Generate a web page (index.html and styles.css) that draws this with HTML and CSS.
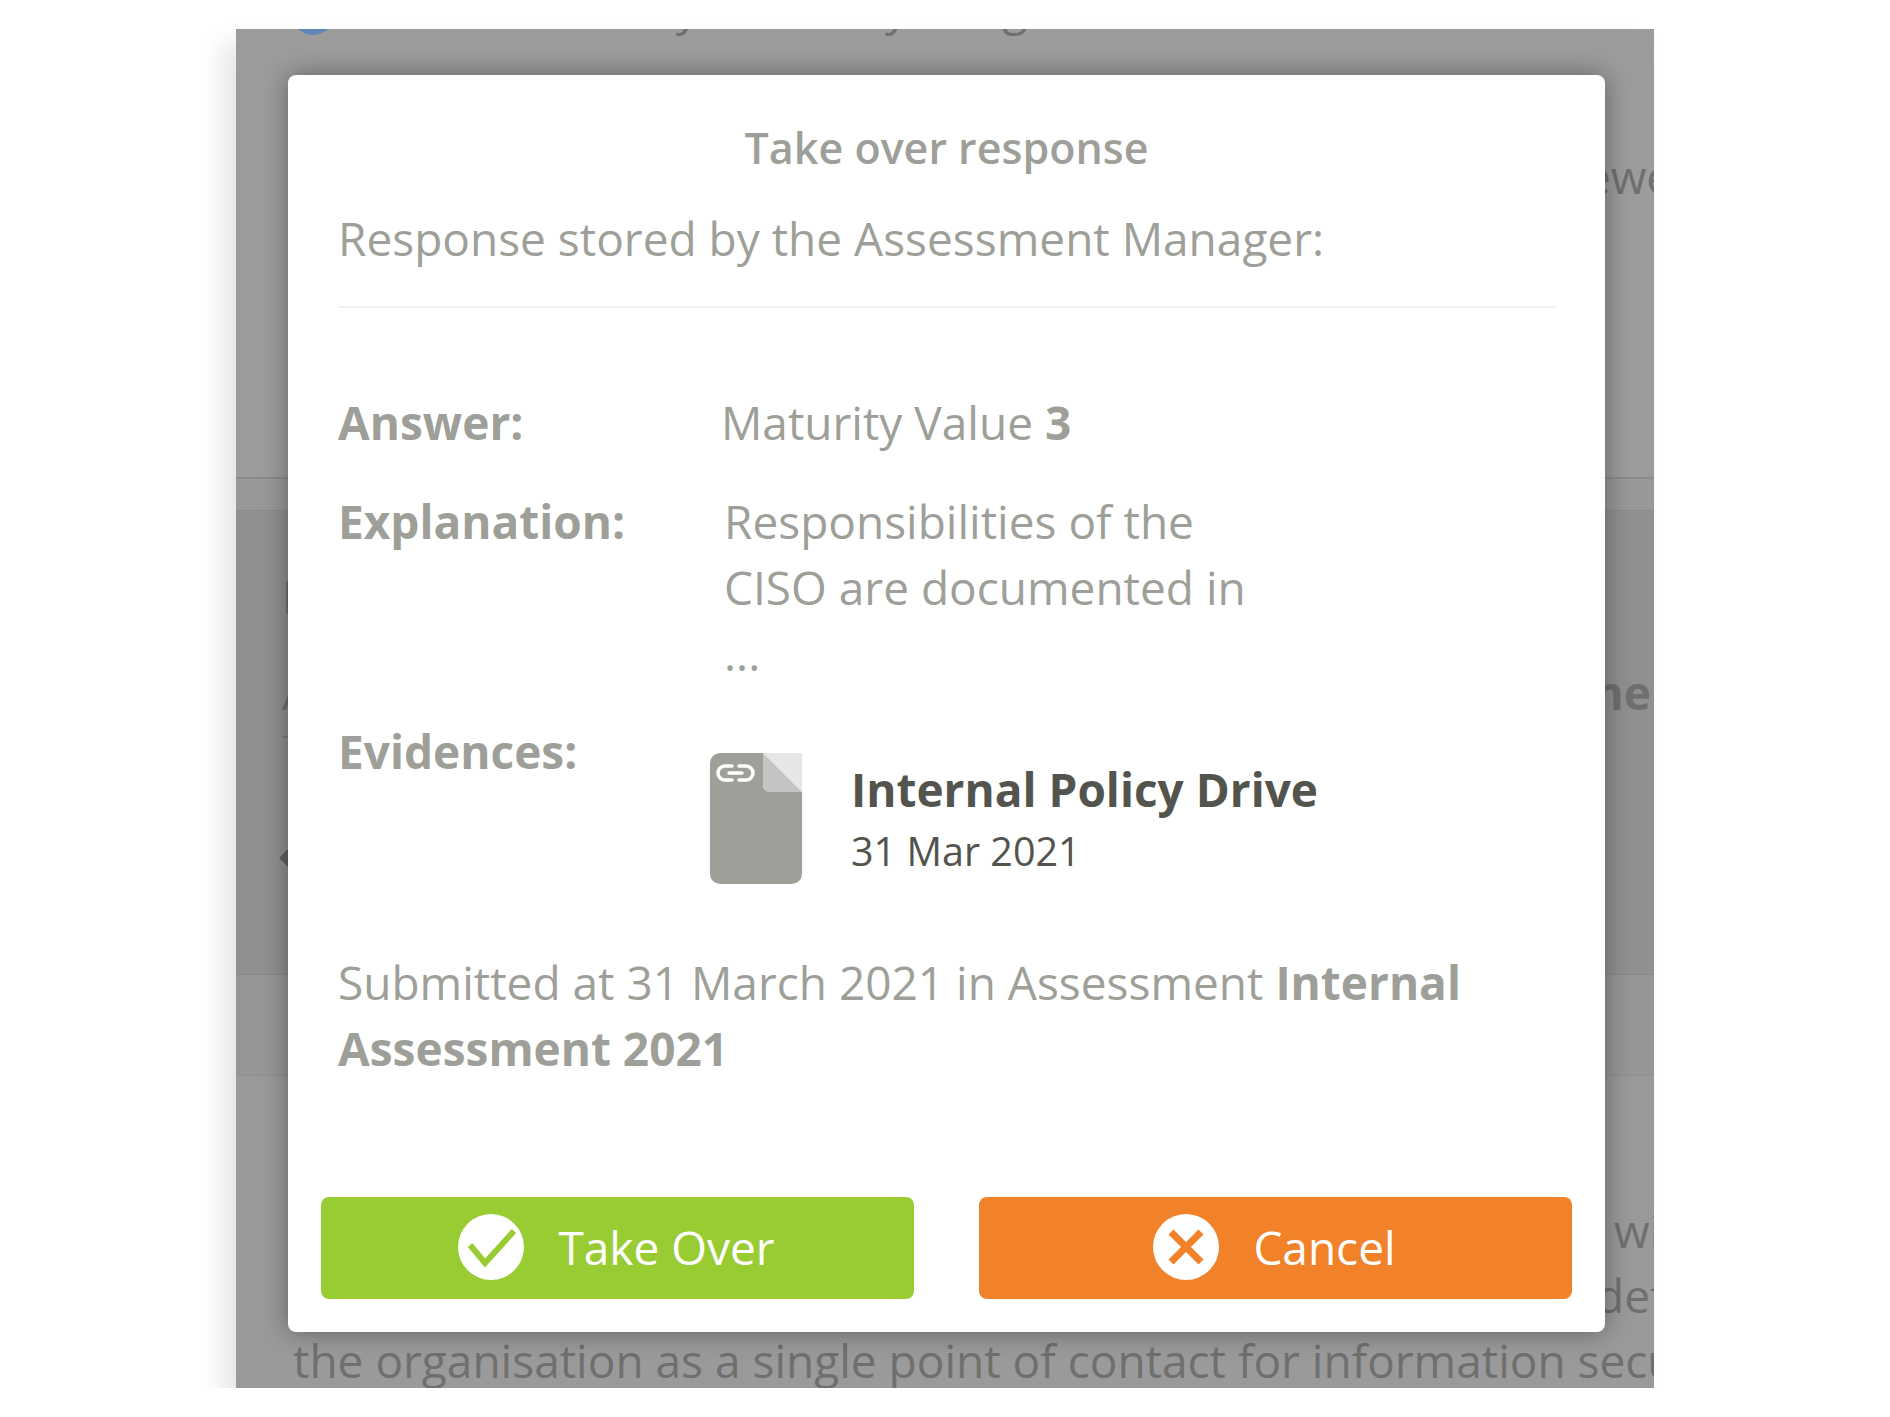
FILE: index.html
```html
<!DOCTYPE html>
<html lang="en">
<head>
    <meta charset="UTF-8">
    <title>Take over response</title>
    <link rel="stylesheet" href="styles.css">
</head>
<body>
    <div class="screen">
        <div class="page">
            <section class="page-top">
                <div class="question">
                    <span class="dot"></span>
                    <span class="question-text">Is there a clearly stated by the general</span>
                </div>
                <div class="reviewer">Reviewer</div>
            </section>
            <div class="page-band"></div>
            <section class="page-main">
                <div class="main-title">I</div>
                <div class="main-row">
                    <span>A</span>
                    <b>Done</b>
                </div>
                <div class="main-rule"></div>
                <div class="main-arrow"></div>
            </section>
            <div class="page-foot"></div>
            <section class="page-text">
                <p>The Group Information Security Officer is now appointed and will</p>
                <p>and has the authority and the resources to take on the tasks defined</p>
                <p>the organisation as a single point of contact for information security</p>
            </section>
        </div>

        <div class="modal">
            <h2 class="modal-title">Take over response</h2>
            <p class="modal-sub">Response stored by the Assessment Manager:</p>
            <div class="modal-rule"></div>

            <div class="details">
                <div class="label label-answer">Answer:</div>
                <div class="value value-answer">Maturity Value <b>3</b></div>

                <div class="label label-expl">Explanation:</div>
                <div class="value value-expl">Responsibilities of the<br>CISO are documented in<br>...</div>

                <div class="label label-evid">Evidences:</div>
                <div class="evidence">
                    <svg class="doc-icon" viewBox="0 0 92 131" aria-hidden="true">
                        <path fill="#e6e6e4" d="M53 0H92V39z"/>
                        <path fill="#9e9f99" d="M10 0H53V32a7 7 0 0 0 7 7H92V121a10 10 0 0 1-10 10H10a10 10 0 0 1-10-10V10A10 10 0 0 1 10 0z"/>
                        <path fill="#c4c5c2" d="M53 0L92 39H60a7 7 0 0 1-7-7z"/>
                        <path fill="none" stroke="#fff" stroke-width="3.5" stroke-linecap="round" d="M22 13h-7a7 7 0 0 0 0 14h7M29 13h7a7 7 0 0 1 0 14h-7M19 20h13"/>
                    </svg>
                    <div class="evidence-text">
                        <div class="evidence-name">Internal Policy Drive</div>
                        <div class="evidence-date">31 Mar 2021</div>
                    </div>
                </div>
            </div>

            <p class="submitted">Submitted at 31 March 2021 in Assessment <b>Internal Assessment 2021</b></p>

            <div class="actions">
                <button class="btn btn-ok">
                    <svg class="btn-icon" viewBox="0 0 66 66" aria-hidden="true">
                        <circle cx="33" cy="33" r="33" fill="#fff"/>
                        <path d="M12 31L27 49L56 17" fill="none" stroke="#99cc33" stroke-width="6"/>
                    </svg>
                    <span>Take Over</span>
                </button>
                <button class="btn btn-cancel">
                    <svg class="btn-icon" viewBox="0 0 66 66" aria-hidden="true">
                        <circle cx="33" cy="33" r="33" fill="#fff"/>
                        <path d="M18 18L48 48M48 18L18 48" fill="none" stroke="#f2822a" stroke-width="7"/>
                    </svg>
                    <span>Cancel</span>
                </button>
            </div>
        </div>
    </div>
</body>
</html>
```

FILE: styles.css
```css
body {
    margin: 0;
    background: #fff;
    font-family: 'Open Sans', 'Noto Sans', sans-serif;
}

.screen {
    position: relative;
    width: 1418px;
    height: 1359px;
    margin: 29px 0 0 236px;
    overflow: visible;
}

/* dimmed page behind the dialog */
.page {
    width: 100%;
    height: 100%;
    overflow: hidden;
    display: flex;
    flex-direction: column;
    background: #9c9c9c;
    color: #6f706e;
    font-size: 46px;
    box-shadow: -14px 14px 24px rgba(0, 0, 0, 0.1);
}

.page-top {
    height: 448px;
    flex: none;
    padding-left: 55px;
    box-sizing: border-box;
}

.question {
    display: flex;
    align-items: center;
    gap: 14px;
    height: 44px;
    margin-top: -38px;
    white-space: nowrap;
}

.question-text {
    padding-bottom: 12px;
}

.dot {
    width: 44px;
    height: 44px;
    flex: none;
    border-radius: 50%;
    background: #5f86b5;
}

.reviewer {
    margin-top: 110px;
    text-align: right;
    margin-right: -37px;
}

.page-band {
    height: 31px;
    flex: none;
    background: #989898;
    border-top: 2px solid #8b8b8b;
}

.page-main {
    height: 465px;
    flex: none;
    padding-left: 46px;
    box-sizing: border-box;
    background: #8f9190;
    border-top: 1px solid #8a8a8a;
    border-bottom: 1px solid #898b8a;
}

.main-title {
    margin-top: 60px;
    font-weight: 700;
    line-height: 50px;
}

.main-row {
    display: flex;
    justify-content: space-between;
    margin-top: 46px;
    line-height: 50px;
}

.main-row b {
    margin-right: 3px;
}

.main-rule {
    width: 200px;
    height: 2px;
    margin-top: 19px;
    background: #7d7e7d;
}

.main-arrow {
    width: 14px;
    height: 14px;
    margin-top: 113px;
    background: #606160;
    transform: rotate(45deg);
}

.page-foot {
    height: 100px;
    flex: none;
    background: #969696;
    border-bottom: 1px solid #8f8f8f;
}

.page-text {
    flex: 1;
    padding: 122px 0 0 57px;
    background: #9a9a9a;
    line-height: 65px;
    white-space: nowrap;
}

.page-text p {
    margin: 0;
}

/* dialog */
.modal {
    position: absolute;
    left: 52px;
    top: 46px;
    width: 1317px;
    height: 1257px;
    box-sizing: border-box;
    padding: 45px 33px 33px;
    display: flex;
    flex-direction: column;
    background: #fff;
    border-radius: 8px;
    box-shadow: 0 0 26px rgba(0, 0, 0, 0.38);
    color: #9e9f99;
    font-size: 46px;
    line-height: 66px;
}

.modal-title {
    margin: 0;
    font-size: 43px;
    font-weight: 600;
    line-height: 56px;
    text-align: center;
}

.modal-sub {
    margin: 32px 17px 0;
    line-height: 60px;
}

.modal-rule {
    height: 2px;
    margin: 38px 17px 0;
    background: #f2f0ec;
}

.details {
    display: grid;
    grid-template-columns: 383px 1fr;
    margin: 81px 17px 0;
}

.label {
    font-weight: 700;
}

.value b {
    font-weight: 700;
}

.value-answer,
.label-answer {
    margin-bottom: 33px;
}

.value-expl {
    padding-left: 3px;
    margin-bottom: 32px;
}

.evidence {
    display: flex;
    align-items: flex-start;
    gap: 49px;
    margin: 0 0 0 -11px;
}

.doc-icon {
    width: 92px;
    height: 131px;
    flex: none;
    margin-top: 35px;
}

.evidence-text {
    margin-top: 41px;
    color: #53544e;
}

.evidence-name {
    font-weight: 700;
    line-height: 61px;
}

.evidence-date {
    font-size: 39.5px;
    line-height: 63px;
}

.submitted {
    margin: 65px 17px 0;
}

.submitted b {
    font-weight: 700;
}

.actions {
    display: flex;
    gap: 65px;
    margin-top: auto;
}

.btn {
    flex: 1;
    height: 102px;
    display: flex;
    align-items: center;
    justify-content: center;
    gap: 34px;
    padding: 0 2px 2px 0;
    border: none;
    border-radius: 8px;
    color: #fff;
    font-family: inherit;
    font-size: 46px;
}

.btn-icon {
    width: 66px;
    height: 66px;
    flex: none;
}

.btn-ok {
    background: #99cc33;
}

.btn-cancel {
    background: #f2822a;
}
```
